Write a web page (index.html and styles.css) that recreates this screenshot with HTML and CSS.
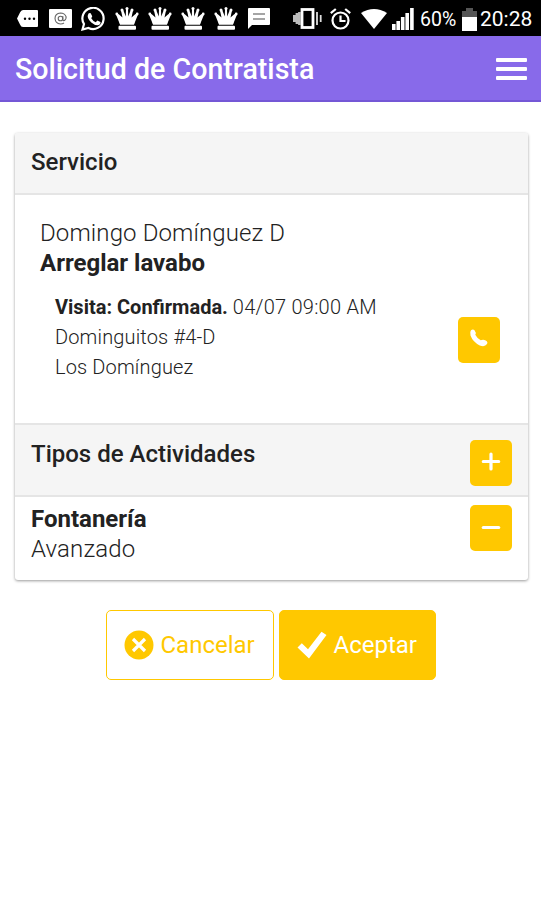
FILE: index.html
```html
<!DOCTYPE html>
<html lang="es">
<head>
    <meta charset="UTF-8">
    <title>Solicitud de Contratista</title>
    <link rel="stylesheet" href="styles.css">
</head>
<body>
    <svg class="defs" width="0" height="0">
        <symbol id="crown" viewBox="0 0 24 23">
            <path d="M5 17.500L1.200 8 3.500 7 7.500 10.500 6 3.500 8.200 3 10.800 9.500 11 2h2l.2 7.500L15.800 3l2.200.5-1.500 7L20.500 7l2.300 1L19 17.500z"/>
            <path d="M5 17.500L4 11.500 8 13 12 10.500 16 13 20 11.500 19 17.500z"/>
            <circle cx="1.800" cy="7" r="1.400"/><circle cx="7" cy="3" r="1.500"/><circle cx="12" cy="1.600" r="1.500"/><circle cx="17" cy="3" r="1.500"/><circle cx="22.200" cy="7" r="1.400"/>
            <rect x="3.500" y="18.700" width="17.500" height="4" rx="1"/>
        </symbol>
    </svg>
    <div class="status-bar">
        <div class="notifications">
            <svg class="tag" width="21" height="17" viewBox="0 0 21 17"><path fill="#fff" d="M6 0h14a1 1 0 0 1 1 1v15a1 1 0 0 1-1 1H6Q4 17 3 14.500L0 8.500 3 2.500Q4 0 6 0z"/><g fill="#000"><circle cx="8" cy="8.700" r="1.200"/><circle cx="12.500" cy="8.700" r="1.200"/><circle cx="17" cy="8.700" r="1.200"/></g></svg>
            <svg class="mail" width="23" height="19" viewBox="0 0 23 19"><rect width="23" height="19" rx="1" fill="#fff"/><g fill="none" stroke="#666" stroke-width="1.100"><circle cx="11.500" cy="9.500" r="2.300"/><path d="M13.800 7v3.500q.2 1.500 1.600 1 2.200-1.500 1.600-4Q15.500 4 11.500 4 6 4.500 6 9.500q.4 5 5.500 5.500 2 0 3.500-1"/></g></svg>
            <svg class="whatsapp" width="25" height="24" viewBox="0 0 25 24"><path fill="none" stroke="#fff" stroke-width="2.200" d="M1.500 22.500L3 17A10.600 10.600 0 1 1 7.500 21z"/><path fill="#fff" d="M7.500 6.500q1-1 2.200-.3l1.500 3q.1.800-1.100 1.900 1.600 3 4.700 4.100l1.500-1.700 3.200 1.600q.4 2.300-2.400 3.200-3 .4-6.800-2.800-5.200-4.800-2.800-9z"/></svg>
            <svg class="crown" width="24" height="23"><use href="#crown"/></svg>
            <svg class="crown" width="24" height="23"><use href="#crown"/></svg>
            <svg class="crown" width="24" height="23"><use href="#crown"/></svg>
            <svg class="crown" width="24" height="23"><use href="#crown"/></svg>
            <svg class="message" width="22" height="21" viewBox="0 0 22 21"><path fill="#fff" d="M1 0h20a1 1 0 0 1 1 1v15a1 1 0 0 1-1 1H4l-4 4V1a1 1 0 0 1 1-1z"/><path stroke="#888" stroke-width="1.500" d="M5 6h12M5 11h12"/></svg>
        </div>
        <div class="system">
            <svg class="vibrate" width="29" height="21" viewBox="0 0 29 21"><rect x="9" y="1.500" width="11" height="18" fill="none" stroke="#fff" stroke-width="2.800"/><path stroke="#bbb" stroke-width="2.800" d="M1.400 7v7M4 5v11M6.500 4v13"/><path stroke="#ddd" stroke-width="1.800" d="M24 4v13M27.700 7v7"/></svg>
            <svg class="alarm" width="21" height="22" viewBox="0 0 21 22" fill="none" stroke="#fff" stroke-width="2.200"><circle cx="10.500" cy="12.500" r="8"/><path d="M.8 5.200L5.800 1M20.200 5.200L15.200 1M10.500 7.500v5.500h5"/></svg>
            <svg class="wifi" width="26" height="20" viewBox="0 0 26 20"><path fill="#fff" d="M0 4Q13-4 26 4L13 20z"/></svg>
            <svg class="signal" width="22" height="22" viewBox="0 0 22 22"><path stroke="#fff" stroke-width="3.600" d="M1.800 22v-6M6.200 22v-9M10.700 22V9M15.200 22V5M19.900 22V0"/></svg>
            <span class="percent">60%</span>
            <svg class="battery" width="15" height="23" viewBox="0 0 15 23"><path fill="#555" d="M4 0h7v3h4v6H0V3h4z"/><path fill="#fff" d="M0 9h15v14H0z"/></svg>
            <span class="time">20:28</span>
        </div>
    </div>
    <div class="header">
        <h1>Solicitud de Contratista</h1>
        <div class="menu"><span></span><span></span><span></span></div>
    </div>
    <div class="card">
        <div class="card-header">Servicio</div>
        <div class="service">
            <div class="client">Domingo Domínguez D</div>
            <div class="job">Arreglar lavabo</div>
            <div class="visit">
                <div class="details">
                    <div class="line date"><b>Visita: Confirmada.</b> <span>04/07 09:00 AM</span></div>
                    <div class="line street"><span>Dominguitos #4-D</span></div>
                    <div class="line city"><span>Los Domínguez</span></div>
                </div>
                <button class="small-btn call"><svg width="20" height="20" viewBox="0 0 20 20"><path fill="#fff" d="M2 1.200Q4 0 5.500 1.200q2 2.300.8 4.600 1.800 3.600 5.400 5.500 2.500-1.200 5 .2 2.600 1.600 1.300 3.500-2.300 3.400-7.200 1.400-7-3.600-9.300-10Q.5 3 2 1.200z"/></svg></button>
            </div>
        </div>
        <div class="card-header activities">
            <span>Tipos de Actividades</span>
            <button class="small-btn"><svg width="20" height="20" viewBox="0 0 20 20"><path stroke="#fff" stroke-width="3.200" stroke-linecap="round" d="M10 2v15M2.300 9.500h15.400"/></svg></button>
        </div>
        <div class="activity">
            <div>
                <div class="name">Fontanería</div>
                <div class="level">Avanzado</div>
            </div>
            <button class="small-btn"><svg width="20" height="20" viewBox="0 0 20 20"><path stroke="#fff" stroke-width="3.200" stroke-linecap="round" d="M2.300 10.500h15.400"/></svg></button>
        </div>
    </div>
    <div class="actions">
        <button class="btn cancel"><svg width="30" height="30" viewBox="0 0 30 30"><circle cx="15" cy="15" r="14.500" fill="#ffc800"/><path stroke="#fff" stroke-width="3.200" d="M9 9l12 12M21 9L9 21"/></svg><span>Cancelar</span></button>
        <button class="btn accept"><svg width="30" height="28" viewBox="0 0 30 28"><path fill="#fff" d="M.5 16.500l4.300-4.200 6.200 6L24.500.7 29.500 4 12 27.500z"/></svg><span>Aceptar</span></button>
    </div>
</body>
</html>
```
FILE: styles.css
```css
body {
    font-family: Roboto, sans-serif;
    margin: 0;
    background-color: #fff;
    color: #222;
}
svg {
    display: block;
    flex: none;
}
.defs {
    height: 0;
}
.status-bar {
    display: flex;
    justify-content: space-between;
    height: 36px;
    padding: 0 10px 0 17px;
    background-color: #000;
    color: #fff;
}
.notifications, .system {
    display: flex;
    align-items: center;
}
.mail {
    margin: 0 9px 0 11px;
}
.whatsapp {
    margin: 1px 9px 0 0;
}
.crown {
    fill: #fff;
    margin: 1px 9px 0 0;
}
.message {
    margin: 1px 0 0 1px;
}
.vibrate {
    margin-left: 2px;
}
.alarm {
    margin: 1px 10px 0 8px;
}
.wifi {
    margin-top: 1px;
}
.signal {
    margin: 2px 6px 0 5px;
}
.percent {
    width: 42px;
    font-size: 19.500px;
    padding-top: 2px;
}
.battery {
    margin: 2px 3px 0 0;
}
.time {
    width: 51px;
    font-size: 21px;
    padding-top: 2px;
}
.header {
    display: flex;
    align-items: center;
    justify-content: space-between;
    box-sizing: border-box;
    height: 66px;
    padding: 2px 14px 0 15px;
    background-color: #886aea;
    border-bottom: 2px solid #7457d6;
    color: #fff;
}
h1 {
    margin: 0;
    font-size: 28.600px;
    font-weight: 500;
}
.menu {
    display: grid;
    gap: 5px;
    width: 31px;
}
.menu span {
    height: 4px;
    border-radius: 1px;
    background-color: #fff;
}
.card {
    margin: 31px 13px 0 15px;
    height: 447px;
    border-radius: 3px;
    box-shadow: 0 1px 3px rgba(0, 0, 0, 0.4);
    overflow: hidden;
}
.card-header {
    box-sizing: border-box;
    height: 62px;
    padding: 0 16px;
    background-color: #f5f5f5;
    border-bottom: 2px solid #e5e5e5;
    font-size: 24px;
    font-weight: 500;
    line-height: 59px;
}
.service {
    box-sizing: border-box;
    height: 228px;
    padding: 23px 28px 0 25px;
}
.client, .job {
    font-size: 24px;
    font-weight: 700;
    line-height: 30px;
}
.client {
    font-weight: 300;
    letter-spacing: 0.120px;
}
.visit {
    display: flex;
    justify-content: space-between;
    padding: 14px 0 0 15px;
}
.line {
    font-size: 20px;
    font-weight: 300;
    line-height: 30px;
}
.line span {
    letter-spacing: 0.150px;
}
.date span {
    letter-spacing: 0.250px;
}
.line b {
    font-weight: 700;
}
.small-btn {
    display: flex;
    justify-content: center;
    box-sizing: border-box;
    flex: none;
    width: 42px;
    height: 46px;
    padding: 12px 0 0;
    border: none;
    border-radius: 5px;
    background-color: #ffc800;
}
.call {
    margin-top: 25px;
}
.activities {
    display: flex;
    justify-content: space-between;
    height: 74px;
    padding-top: 15px;
    border-top: 2px solid #e5e5e5;
}
.activities span {
    line-height: 29px;
}
.activity {
    display: flex;
    justify-content: space-between;
    padding: 8px 16px;
    font-size: 24px;
    font-weight: 300;
    line-height: 30px;
}
.name {
    margin-top: -1px;
    font-weight: 700;
}
.level {
    letter-spacing: 0.150px;
}
.actions {
    display: flex;
    justify-content: center;
    gap: 5px;
    margin-top: 30px;
}
.btn {
    display: flex;
    align-items: center;
    gap: 7px;
    box-sizing: border-box;
    height: 70px;
    padding: 0 0 0 17px;
    border: 1.500px solid #ffc800;
    border-radius: 5px;
    font: 400 24px Roboto, sans-serif;
}
.cancel {
    width: 168px;
    background-color: #fff;
    color: #ffc800;
}
.accept {
    width: 157px;
    background-color: #ffc800;
    color: #fff;
}
```
